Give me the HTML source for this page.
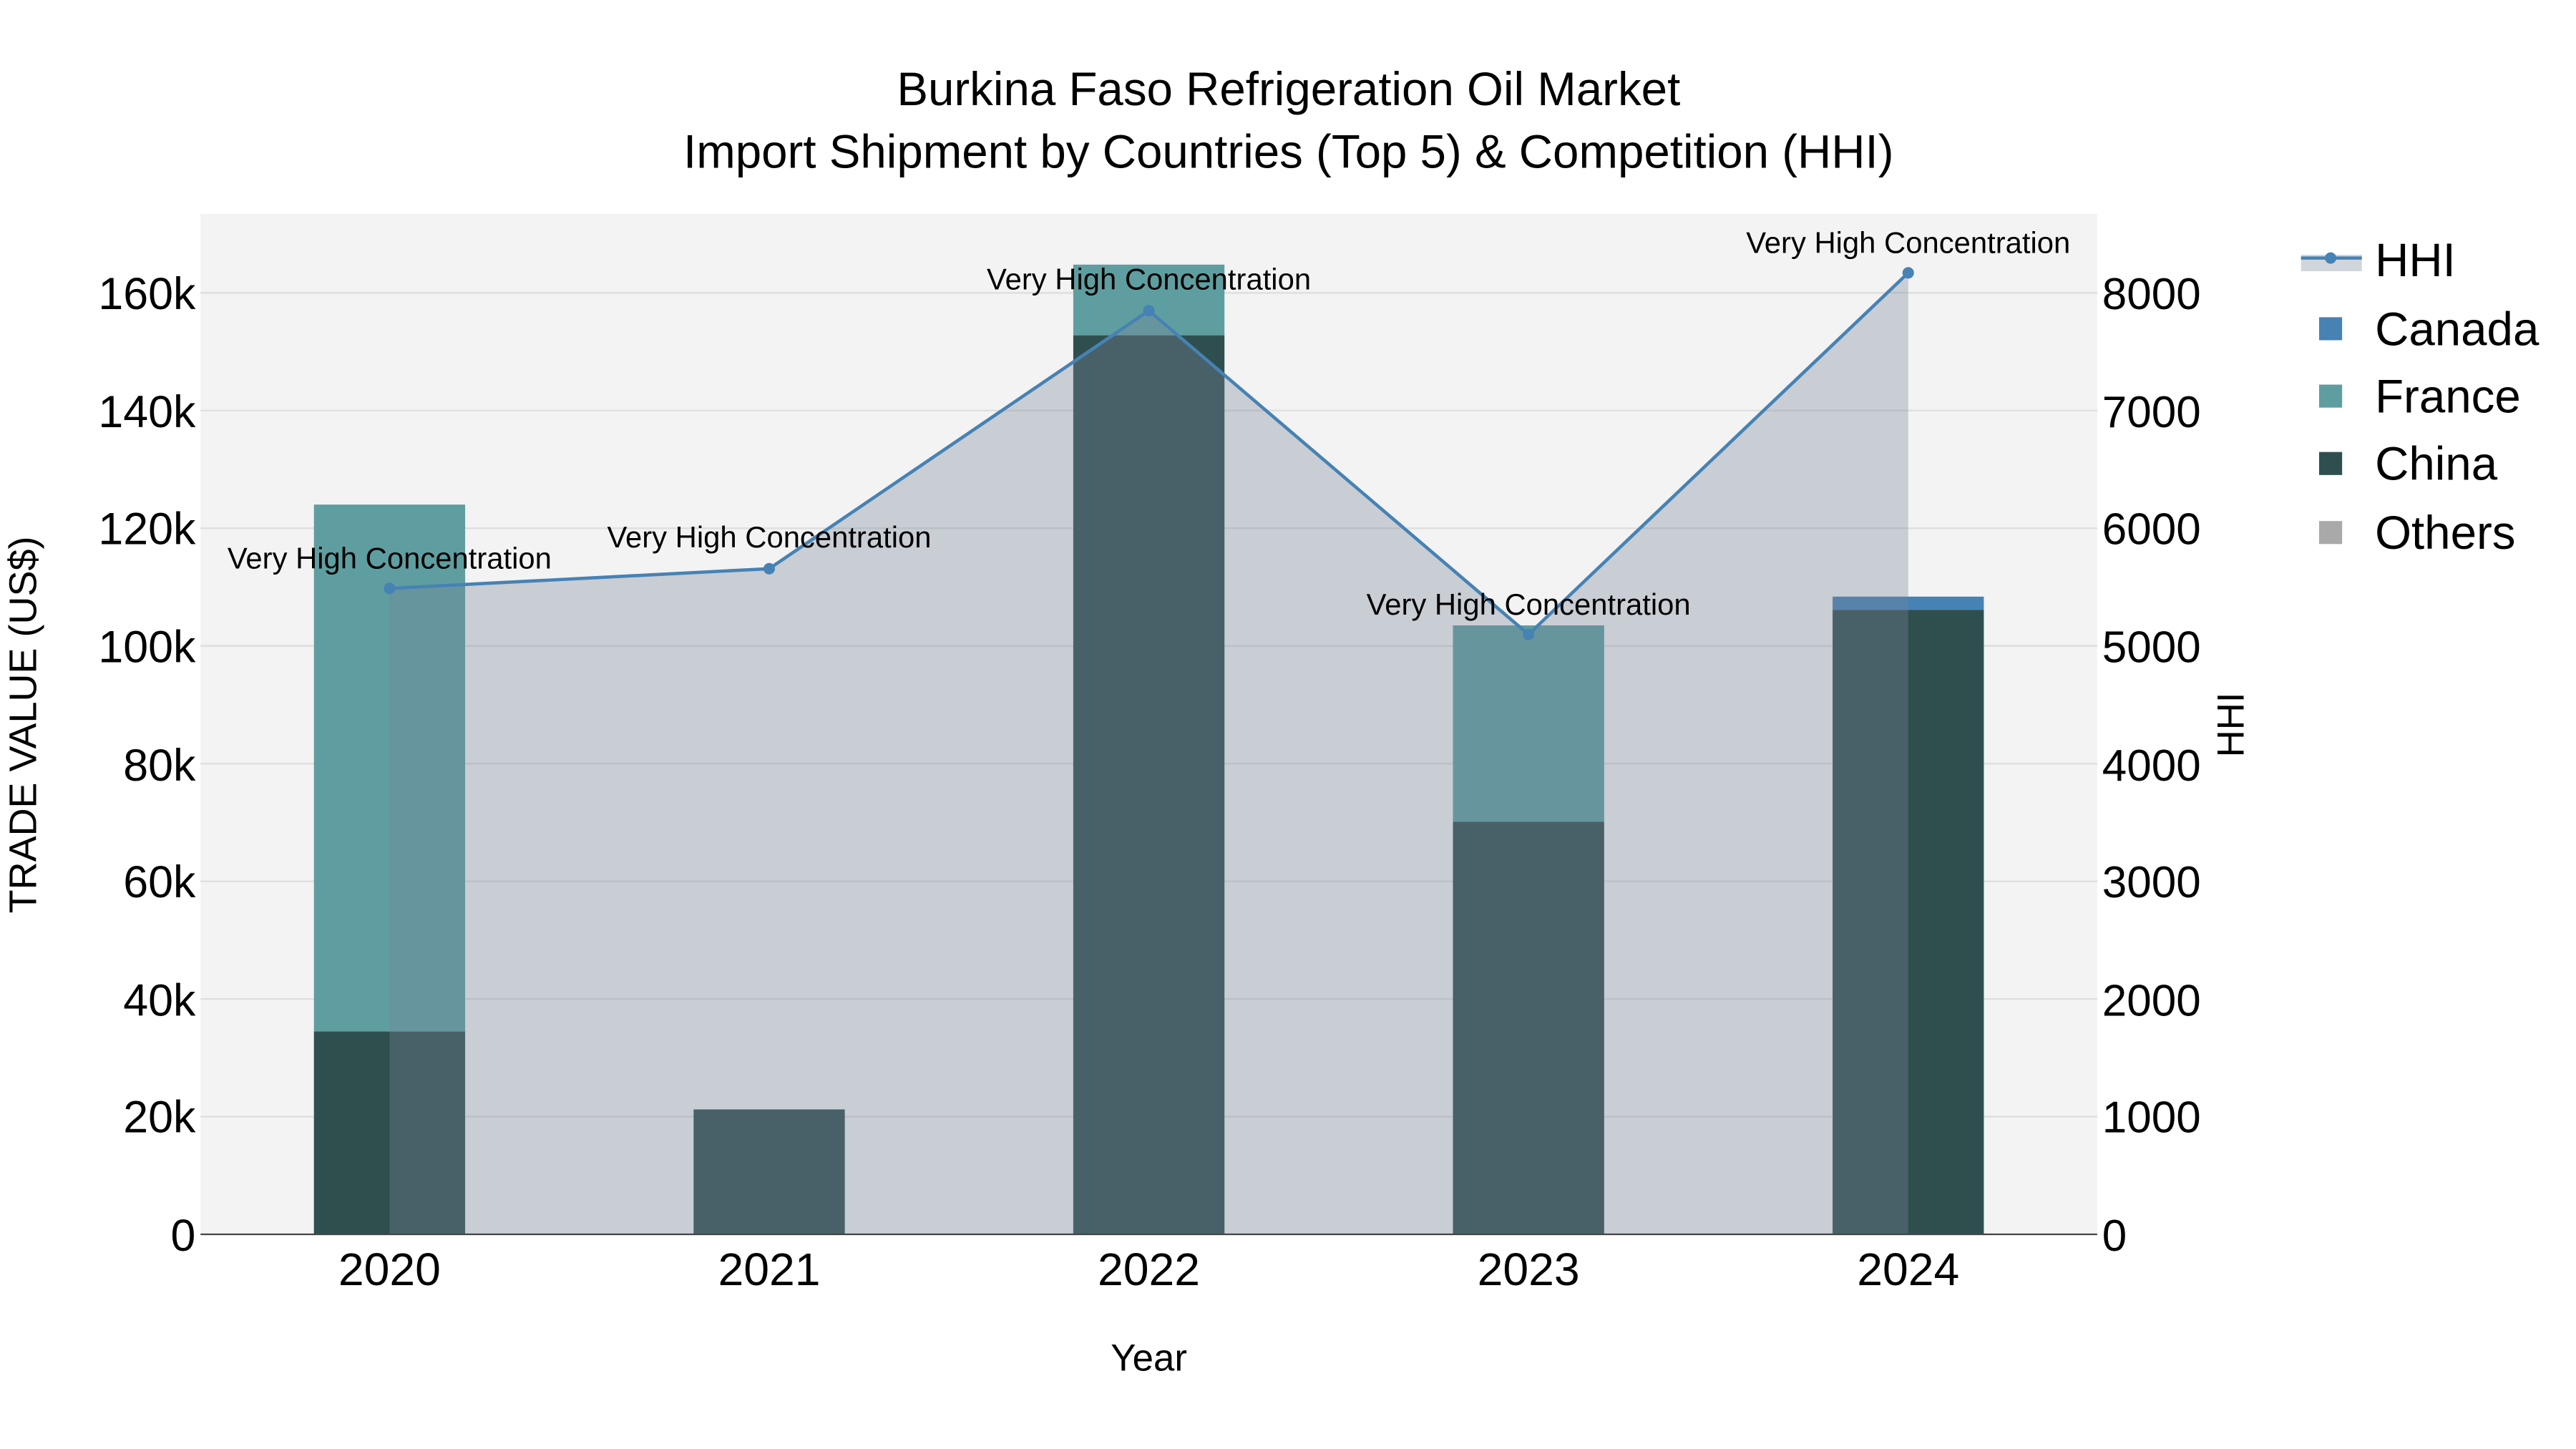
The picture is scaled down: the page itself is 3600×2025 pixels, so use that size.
<!DOCTYPE html>
<html><head><meta charset="utf-8"><style>
html,body{margin:0;padding:0;background:#fff;}
svg{display:block;font-family:"Liberation Sans",Arial,sans-serif;}
</style></head><body>
<svg width="3600" height="2025" viewBox="0 0 1567.3 881.6" xmlns="http://www.w3.org/2000/svg">
<rect width="1600" height="900" fill="#fff"/>
<rect x="122" y="130" width="1154" height="621" fill="#f3f3f3"/>
<g stroke="#dedede" stroke-width="1">
<line x1="122" x2="1276" y1="679.4" y2="679.4"/>
<line x1="122" x2="1276" y1="607.8" y2="607.8"/>
<line x1="122" x2="1276" y1="536.2" y2="536.2"/>
<line x1="122" x2="1276" y1="464.6" y2="464.6"/>
<line x1="122" x2="1276" y1="393" y2="393"/>
<line x1="122" x2="1276" y1="321.4" y2="321.4"/>
<line x1="122" x2="1276" y1="249.8" y2="249.8"/>
<line x1="122" x2="1276" y1="178.2" y2="178.2"/>
</g>
<rect x="191" y="627.5" width="92" height="123.5" fill="#2f4f4f"/>
<rect x="191" y="307" width="92" height="320.5" fill="#5f9ea0"/>
<rect x="422" y="675" width="92" height="76" fill="#2f4f4f"/>
<rect x="653" y="204" width="92" height="547" fill="#2f4f4f"/>
<rect x="653" y="161" width="92" height="43" fill="#5f9ea0"/>
<rect x="884" y="500" width="92" height="251" fill="#2f4f4f"/>
<rect x="884" y="380.5" width="92" height="119.5" fill="#5f9ea0"/>
<rect x="1115" y="371" width="92" height="380" fill="#2f4f4f"/>
<rect x="1115" y="363" width="92" height="8" fill="#4682b4"/>
<polygon points="237,751 237,358 468,346 699,189 930,386 1161,166 1161,751" fill="rgba(120,131,152,0.34)"/>
<polyline points="237,358 468,346 699,189 930,386 1161,166" fill="none" stroke="#4682b4" stroke-width="2"/>
<g fill="#4682b4"><circle cx="237" cy="358" r="3.5"/><circle cx="468" cy="346" r="3.5"/><circle cx="699" cy="189" r="3.5"/><circle cx="930" cy="386" r="3.5"/><circle cx="1161" cy="166" r="3.5"/></g>
<line x1="122" x2="1276" y1="751" y2="751" stroke="#444" stroke-width="1"/>
<g font-size="18.2" text-anchor="middle" fill="#000">
<text x="237" y="346">Very High Concentration</text>
<text x="468" y="333">Very High Concentration</text>
<text x="699" y="176">Very High Concentration</text>
<text x="930" y="374">Very High Concentration</text>
<text x="1161" y="154">Very High Concentration</text>
</g>
<g font-size="27.3" text-anchor="end" fill="#000">
<text x="119" y="761">0</text>
<text x="119" y="689">20k</text>
<text x="119" y="618">40k</text>
<text x="119" y="546">60k</text>
<text x="119" y="475">80k</text>
<text x="119" y="403">100k</text>
<text x="119" y="331">120k</text>
<text x="119" y="260">140k</text>
<text x="119" y="188">160k</text>
</g>
<g font-size="27" text-anchor="start" fill="#000">
<text x="1279" y="761">0</text>
<text x="1279" y="689">1000</text>
<text x="1279" y="618">2000</text>
<text x="1279" y="546">3000</text>
<text x="1279" y="475">4000</text>
<text x="1279" y="403">5000</text>
<text x="1279" y="331">6000</text>
<text x="1279" y="260">7000</text>
<text x="1279" y="188">8000</text>
</g>
<g font-size="28" text-anchor="middle" fill="#000">
<text x="237" y="782">2020</text>
<text x="468" y="782">2021</text>
<text x="699" y="782">2022</text>
<text x="930" y="782">2023</text>
<text x="1161" y="782">2024</text>
</g>
<text x="699" y="834" font-size="23" text-anchor="middle">Year</text>
<text transform="translate(22,441) rotate(-90)" font-size="23.5" text-anchor="middle">TRADE VALUE (US$)</text>
<text transform="translate(1365,441) rotate(-90)" font-size="23" text-anchor="middle">HHI</text>
<text x="784" y="64" font-size="28.5" text-anchor="middle">Burkina Faso Refrigeration Oil Market</text>
<text x="784" y="102" font-size="28.5" text-anchor="middle">Import Shipment by Countries (Top 5) &amp; Competition (HHI)</text>
<rect x="1400" y="155" width="37" height="10" fill="rgba(120,131,152,0.34)"/>
<line x1="1400" x2="1437" y1="157" y2="157" stroke="#4682b4" stroke-width="2"/>
<circle cx="1418" cy="157" r="3.5" fill="#4682b4"/>
<rect x="1411" y="193" width="14" height="14" fill="#4682b4"/>
<rect x="1411" y="234" width="14" height="14" fill="#5f9ea0"/>
<rect x="1411" y="275" width="14" height="14" fill="#2f4f4f"/>
<rect x="1411" y="317" width="14" height="14" fill="#a9a9a9"/>
<g font-size="28.5" fill="#000">
<text x="1445" y="168">HHI</text>
<text x="1445" y="210">Canada</text>
<text x="1445" y="251">France</text>
<text x="1445" y="292">China</text>
<text x="1445" y="334">Others</text>
</g>
</svg>
</body></html>
